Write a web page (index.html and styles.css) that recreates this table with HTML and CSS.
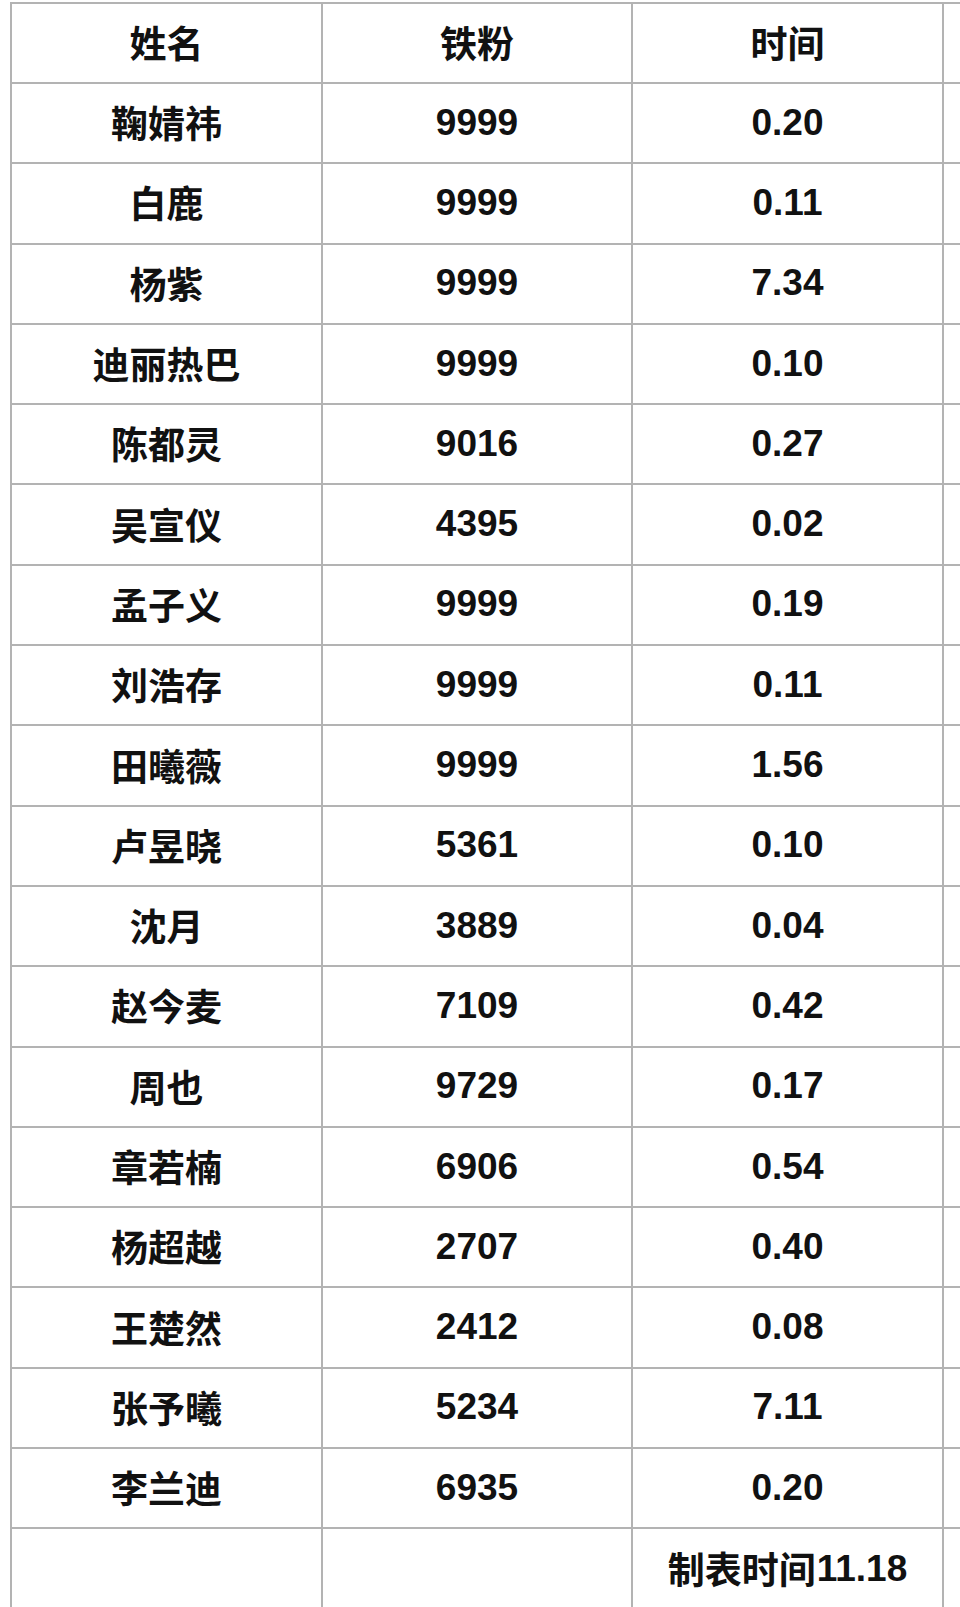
FILE: index.html
```html
<!DOCTYPE html>
<html lang="zh-CN">
<head>
<meta charset="utf-8">
<title>铁粉</title>
<link rel="stylesheet" href="styles.css">
</head>
<body>
<div class="sheet">
  <div class="cell head">姓名</div><div class="cell head">铁粉</div><div class="cell head">时间</div><div class="cell edge"></div>
  <div class="cell name">鞠婧祎</div><div class="cell num">9999</div><div class="cell num">0.20</div><div class="cell edge"></div>
  <div class="cell name">白鹿</div><div class="cell num">9999</div><div class="cell num">0.11</div><div class="cell edge"></div>
  <div class="cell name">杨紫</div><div class="cell num">9999</div><div class="cell num">7.34</div><div class="cell edge"></div>
  <div class="cell name">迪丽热巴</div><div class="cell num">9999</div><div class="cell num">0.10</div><div class="cell edge"></div>
  <div class="cell name">陈都灵</div><div class="cell num">9016</div><div class="cell num">0.27</div><div class="cell edge"></div>
  <div class="cell name">吴宣仪</div><div class="cell num">4395</div><div class="cell num">0.02</div><div class="cell edge"></div>
  <div class="cell name">孟子义</div><div class="cell num">9999</div><div class="cell num">0.19</div><div class="cell edge"></div>
  <div class="cell name">刘浩存</div><div class="cell num">9999</div><div class="cell num">0.11</div><div class="cell edge"></div>
  <div class="cell name">田曦薇</div><div class="cell num">9999</div><div class="cell num">1.56</div><div class="cell edge"></div>
  <div class="cell name">卢昱晓</div><div class="cell num">5361</div><div class="cell num">0.10</div><div class="cell edge"></div>
  <div class="cell name">沈月</div><div class="cell num">3889</div><div class="cell num">0.04</div><div class="cell edge"></div>
  <div class="cell name">赵今麦</div><div class="cell num">7109</div><div class="cell num">0.42</div><div class="cell edge"></div>
  <div class="cell name">周也</div><div class="cell num">9729</div><div class="cell num">0.17</div><div class="cell edge"></div>
  <div class="cell name">章若楠</div><div class="cell num">6906</div><div class="cell num">0.54</div><div class="cell edge"></div>
  <div class="cell name">杨超越</div><div class="cell num">2707</div><div class="cell num">0.40</div><div class="cell edge"></div>
  <div class="cell name">王楚然</div><div class="cell num">2412</div><div class="cell num">0.08</div><div class="cell edge"></div>
  <div class="cell name">张予曦</div><div class="cell num">5234</div><div class="cell num">7.11</div><div class="cell edge"></div>
  <div class="cell name">李兰迪</div><div class="cell num">6935</div><div class="cell num">0.20</div><div class="cell edge"></div>
  <div class="cell"></div><div class="cell"></div><div class="cell foot">制表时间<span class="digits">11.18</span></div><div class="cell edge"></div>
</div>
</body>
</html>
```

FILE: styles.css
```css
html, body {
  margin: 0;
  padding: 0;
  background: #ffffff;
  overflow: hidden;
}
body {
  width: 960px;
  height: 1607px;
}
.sheet {
  margin: 2px 0 0 10px;
  display: grid;
  grid-template-columns: 311px 310px 311px 16px;
  grid-template-rows: 80px;
  grid-auto-rows: 80.3px;
  border-top: 2px solid #b3b3b3;
  border-left: 2px solid #b3b3b3;
  width: max-content;
  font-family: "Noto Sans CJK SC", "Liberation Sans", sans-serif;
  color: #111111;
}
.cell {
  box-sizing: border-box;
  border-right: 2px solid #b3b3b3;
  border-bottom: 2px solid #b3b3b3;
  display: flex;
  align-items: center;
  justify-content: center;
  font-size: 37px;
  line-height: 1;
  padding-bottom: 1px;
}
.edge {
  border-right: none;
}
.head, .name, .foot {
  font-family: "Noto Sans CJK SC", sans-serif;
  font-weight: 600;
}
.num, .digits {
  font-family: "Liberation Sans", Arial, sans-serif;
  font-weight: 700;
}
.num {
  padding-bottom: 2px;
}
.foot {
  padding-bottom: 0;
}
.digits {
  margin-left: 1px;
}
```
